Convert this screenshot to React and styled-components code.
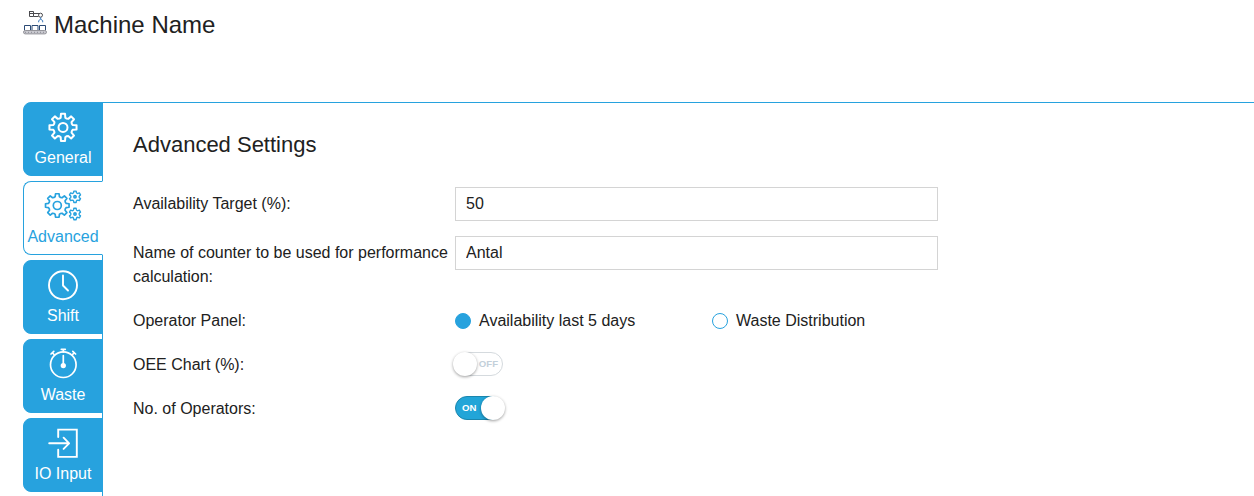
import React, { useState } from "react";
import styled, { createGlobalStyle } from "styled-components";

const BLUE = "#27a2de";

const GlobalStyle = createGlobalStyle`
  * { box-sizing: border-box; }
  body {
    margin: 0;
    background: #fff;
    color: #212121;
    font: 16px/24px "Liberation Sans", Arial, sans-serif;
    overflow: hidden;
  }
`;

const Page = styled.div`
  height: 496px;
  padding-left: 23px;
  display: flex;
  flex-direction: column;
  overflow: hidden;
`;

const Header = styled.header`
  display: flex;
  align-items: flex-start;
  gap: 7px;
  height: 102px;
  flex: none;
  padding-top: 10px;
`;

const Title = styled.h1`
  margin: 0;
  font-size: 24px;
  font-weight: 400;
  line-height: 30px;
`;

const Body = styled.div`
  display: flex;
  flex: 1;
  min-height: 0;
`;

const TabList = styled.nav`
  display: flex;
  flex-direction: column;
  gap: 5px;
  width: 80px;
  flex: none;
`;

const Tab = styled.button`
  display: flex;
  flex-direction: column;
  align-items: center;
  flex: none;
  width: 80px;
  height: 74px;
  margin: 0;
  padding: 4px 0 0;
  border: 1px solid ${BLUE};
  border-right-color: ${(p) => (p.$active ? "#fff" : BLUE)};
  border-radius: 8px 0 0 8px;
  background: ${(p) => (p.$active ? "#fff" : BLUE)};
  color: ${(p) => (p.$active ? BLUE : "#fff")};
  font: inherit;
  line-height: 22px;
  white-space: nowrap;
  z-index: 1;
`;

const Panel = styled.main`
  flex: 1;
  margin-left: -1px;
  padding: 28px 0 0 30px;
  border-top: 1px solid ${BLUE};
  border-left: 1px solid ${BLUE};
`;

const Heading = styled.h2`
  margin: 0 0 28px;
  font-size: 22px;
  font-weight: 400;
  line-height: 28px;
`;

const Form = styled.div`
  display: flex;
  flex-direction: column;
  gap: 15px;
`;

const Row = styled.div`
  display: grid;
  grid-template-columns: 322px 483px;
  align-items: start;
`;

const Label = styled.div`
  padding-top: ${(p) => (p.$field ? 5 : 0)}px;
  white-space: pre-line;
`;

const Input = styled.input`
  width: 483px;
  height: 34px;
  padding: 0 10px 1px;
  border: 1px solid #d4d4d4;
  border-radius: 0;
  background: #fff;
  color: #212121;
  font: inherit;
  outline: none;
`;

const OptionRow = styled(Row)`
  padding-top: 5px;
`;

const Options = styled.div`
  display: grid;
  grid-template-columns: 257px 1fr;
`;

const Option = styled.div`
  display: flex;
  align-items: center;
  gap: 8px;
`;

const Dot = styled.span`
  width: 16px;
  height: 16px;
  border: 1px solid ${BLUE};
  border-radius: 50%;
  background: ${(p) => (p.$checked ? BLUE : "#fff")};
`;

const Switch = styled.button`
  display: flex;
  align-items: center;
  flex-direction: ${(p) => (p.$on ? "row-reverse" : "row")};
  justify-content: space-between;
  width: 48px;
  height: 24px;
  margin: -1px 0 0;
  padding: ${(p) => (p.$on ? "0 0 0 6px" : "0 4px 0 0")};
  border: 1px solid ${(p) => (p.$on ? "#1b86ad" : "#d5dade")};
  border-radius: 12px;
  background: ${(p) => (p.$on ? "#22a5d8" : "#fff")};
  color: ${(p) => (p.$on ? "#fff" : "#c3d0da")};
  font: bold 9.6px/22px "Liberation Sans", Arial, sans-serif;
`;

const Knob = styled.span`
  flex: none;
  width: 24px;
  height: 24px;
  margin: ${(p) => (p.$on ? "0 -3px 0 0" : "0 0 0 -3px")};
  border-radius: 50%;
  background: #fff;
  box-shadow: 0 1px 3px rgba(0, 0, 0, 0.38);
`;

/* Closed wavy outline of a cog with `teeth` rounded teeth. */
function cogPath(cx, cy, outer, inner, teeth, phase = 0) {
  const step = (Math.PI * 2) / teeth;
  const at = (r, a) =>
    `${(cx + r * Math.cos(a)).toFixed(2)} ${(cy + r * Math.sin(a)).toFixed(2)}`;
  let d = "";
  for (let i = 0; i < teeth; i += 1) {
    const a = i * step + phase;
    d += `${i ? "L" : "M"}${at(inner, a - step * 0.3)}`;
    d += `L${at(outer, a - step * 0.19)}`;
    d += `L${at(outer, a + step * 0.19)}`;
    d += `L${at(inner, a + step * 0.3)}`;
    d += `Q${at(inner - 0.8, a + step * 0.5)} ${at(inner, a + step * 0.7)}`;
  }
  return `${d}Z`;
}

function Glyph({ children, width = 2 }) {
  return (
    <svg
      width="44"
      height="40"
      viewBox="0 0 44 40"
      fill="none"
      stroke="currentColor"
      strokeWidth={width}
      strokeLinecap="round"
      strokeLinejoin="round"
    >
      {children}
    </svg>
  );
}

const GeneralIcon = () => (
  <Glyph width={2}>
    <path d={cogPath(22, 20.4, 13.7, 10, 8)} />
    <circle cx="22" cy="20.4" r="4.5" />
  </Glyph>
);

const AdvancedIcon = () => (
  <Glyph width={1.7}>
    <path d={cogPath(16.3, 19.5, 11.9, 9.1, 8)} />
    <circle cx="16.3" cy="19.5" r="4" />
    <g strokeWidth="1.4">
      <path d={cogPath(34, 10.8, 5.8, 4.5, 6, Math.PI / 6)} />
      <path d={cogPath(34, 28, 5.8, 4.5, 6, Math.PI / 6)} />
    </g>
    <circle cx="34" cy="10.8" r="1.1" />
    <circle cx="34" cy="28" r="1.1" />
  </Glyph>
);

const ShiftIcon = () => (
  <Glyph width={1.9}>
    <circle cx="22" cy="20.3" r="14" />
    <path d="M22 10.5v10l5 5" />
  </Glyph>
);

const WasteIcon = () => (
  <Glyph width={1.7}>
    <circle cx="22.3" cy="20.7" r="12.8" />
    <path d="M20.3 5.3h4M22.3 5.3v2.6M22.3 11.5v10M10 10l2.8-2.6M11.4 8.7l1.6 1.8M31.8 7.4l2.8 2.6M33.2 8.7l-1.6 1.8" />
    <circle cx="22.3" cy="21.6" r="1.8" fill="currentColor" />
  </Glyph>
);

const InputIcon = () => (
  <Glyph width={1.9}>
    <path strokeLinejoin="miter" d="M17.2 14V6.6h18.6v27.3H17.2v-7.2" />
    <path d="M8.2 20.3H28M22.6 14.7l5.5 5.6-5.5 5.6" />
  </Glyph>
);

const MachineIcon = () => (
  <svg width="24" height="26" viewBox="0 0 24 26" fill="none" stroke="#4a4a4e" strokeWidth="1">
    <path d="M6.5 1v5.5h4V1.5h-4M6.5 3.5h10M10.5 6.5h5" />
    <circle cx="17.5" cy="5.2" r="2" />
    <path stroke="#3b78b8" d="M17.7 7.2v2M15.7 12.3V10.6l2-1.4 2 1.4v1.7" />
    <path stroke="#2b4a75" d="M1.5 20.5v-5h6v5M9 20.5v-5h6v5M16.5 20.5v-5h6v5" />
    <rect x=".5" y="20.5" width="23" height="3.4" rx="1.7" stroke="#95959b" fill="#c9c9cf" />
    <path stroke="#8a8a94" strokeDasharray="1 2" d="M2 22.3h20" />
  </svg>
);

const TABS = [
  ["General", GeneralIcon],
  ["Advanced", AdvancedIcon],
  ["Shift", ShiftIcon],
  ["Waste", WasteIcon],
  ["IO Input", InputIcon],
];

function Toggle({ initial }) {
  const [on, setOn] = useState(initial);
  return (
    <Switch $on={on} role="switch" aria-checked={on} onClick={() => setOn(!on)}>
      <Knob $on={on} />
      <span>{on ? "ON" : "OFF"}</span>
    </Switch>
  );
}

export default function App() {
  const [tab, setTab] = useState("Advanced");
  const [panel, setPanel] = useState(0);
  return (
    <Page>
      <GlobalStyle />
      <Header>
        <MachineIcon />
        <Title>Machine Name</Title>
      </Header>
      <Body>
        <TabList>
          {TABS.map(([name, Icon]) => (
            <Tab key={name} $active={tab === name} onClick={() => setTab(name)}>
              <Icon />
              {name}
            </Tab>
          ))}
        </TabList>
        <Panel>
          <Heading>Advanced Settings</Heading>
          <Form>
            <Row>
              <Label $field>Availability Target (%):</Label>
              <Input defaultValue="50" />
            </Row>
            <Row>
              <Label $field>{"Name of counter to be used for performance\ncalculation:"}</Label>
              <Input defaultValue="Antal" />
            </Row>
            <OptionRow>
              <Label>Operator Panel:</Label>
              <Options>
                {["Availability last 5 days", "Waste Distribution"].map((text, i) => (
                  <Option key={text} onClick={() => setPanel(i)}>
                    <Dot $checked={panel === i} />
                    {text}
                  </Option>
                ))}
              </Options>
            </OptionRow>
            <OptionRow>
              <Label>OEE Chart (%):</Label>
              <Toggle initial={false} />
            </OptionRow>
            <OptionRow>
              <Label>No. of Operators:</Label>
              <Toggle initial />
            </OptionRow>
          </Form>
        </Panel>
      </Body>
    </Page>
  );
}
